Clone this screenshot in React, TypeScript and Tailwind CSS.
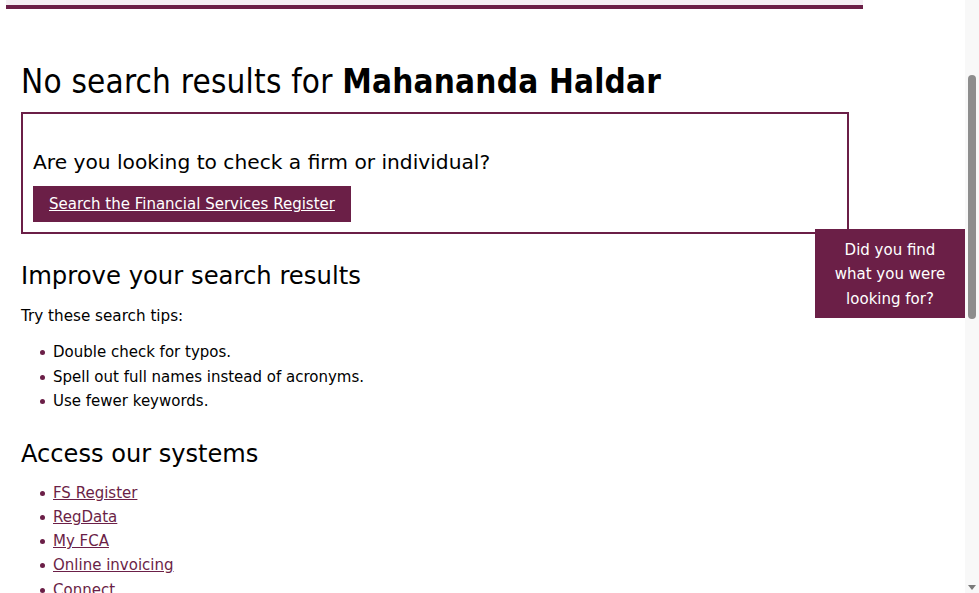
import React from 'react';

const tips = ['Double check for typos.', 'Spell out full names instead of acronyms.', 'Use fewer keywords.'];
const systems = ['FS Register', 'RegData', 'My FCA', 'Online invoicing', 'Connect'];

const App = () => {
  return (
    <div className="min-h-screen bg-white text-black pr-[15px]" style={{ fontFamily: '"DejaVu Sans", Verdana, sans-serif' }}>
      <div className="ml-[6px] w-[857px]">
        <div className="h-[5px] bg-[#f4eef3]"></div>
        <div className="h-[4px] bg-[#6b1f47]"></div>
      </div>

      <main className="pl-[21px] w-[870px]">
        <h1 className="mt-[53px] text-[33px] leading-[40px] tracking-[0.2px]" style={{ fontFamily: '"DejaVu Sans Condensed", "DejaVu Sans", sans-serif' }}>
          No search results for <span className="font-bold">Mahananda Haldar</span>
        </h1>

        <div className="mt-[10px] w-[828px] border-2 border-[#6b1f47] px-[10px] pt-[35px] pb-[10px]">
          <p className="text-[20.2px] leading-[26px]">Are you looking to check a firm or individual?</p>
          <a href="#" className="mt-[11px] inline-block bg-[#6b1f47] px-[16px] py-[8px] text-[15px] leading-[20px] text-white underline">
            Search the Financial Services Register
          </a>
        </div>

        <h2 className="mt-[27px] text-[24.3px] leading-[30px]">Improve your search results</h2>
        <p className="mt-[15px] text-[15.2px] leading-[20px]">Try these search tips:</p>
        <ul className="mt-[14px] pl-[32px] text-[15px] leading-[24.5px]">
          {tips.map((t) => (
            <li key={t} className="relative">
              <span className="absolute -left-[13px] top-[10px] h-[5px] w-[5px] rounded-full bg-[#6b1f47]"></span>
              {t}
            </li>
          ))}
        </ul>

        <h2 className="mt-[25px] text-[24.1px] leading-[30px]">Access our systems</h2>
        <ul className="mt-[12px] pl-[32px] text-[15px] leading-[24.25px]">
          {systems.map((s) => (
            <li key={s} className="relative">
              <span className="absolute -left-[13px] top-[10px] h-[5px] w-[5px] rounded-full bg-[#6b1f47]"></span>
              <a href="#" className="text-[#6b1f47] underline">{s}</a>
            </li>
          ))}
        </ul>
      </main>

      <button className="fixed left-[815px] top-[229px] w-[150px] h-[89px] bg-[#6b1f47] pt-[2px] text-white text-[15px] leading-[24.5px] text-center">
        Did you find<br />what you were<br />looking for?
      </button>

      <div className="fixed right-0 top-0 h-screen w-[14px] bg-[#f8f8f8]">
        <div className="absolute left-[3px] top-[75px] h-[244px] w-[8px] rounded-full bg-[#8d8d8d]"></div>
        <div className="absolute left-[3px] bottom-[3px] h-0 w-0 border-l-[4px] border-r-[4px] border-t-[5px] border-l-transparent border-r-transparent border-t-[#7a7a7a]"></div>
      </div>
    </div>
  );
};

export default App;
